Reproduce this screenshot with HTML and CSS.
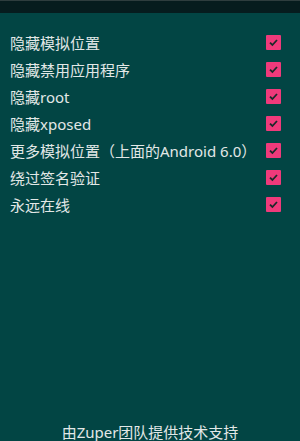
FILE: index.html
```html
<!DOCTYPE html>
<html>
<head>
<meta charset="utf-8">
<link rel="stylesheet" href="styles.css">
</head>
<body>
<div class="topbar"></div>
<div class="list">
  <div class="row"><span class="label">隐藏模拟位置</span><span class="cb"><svg viewBox="0 0 15 15" width="15" height="15"><path d="M4 7.6 L6.4 10 L11 5" fill="none" stroke="#1a2a2a" stroke-width="1.8"/></svg></span></div>
  <div class="row"><span class="label">隐藏禁用应用程序</span><span class="cb"><svg viewBox="0 0 15 15" width="15" height="15"><path d="M4 7.6 L6.4 10 L11 5" fill="none" stroke="#1a2a2a" stroke-width="1.8"/></svg></span></div>
  <div class="row"><span class="label">隐藏root</span><span class="cb"><svg viewBox="0 0 15 15" width="15" height="15"><path d="M4 7.6 L6.4 10 L11 5" fill="none" stroke="#1a2a2a" stroke-width="1.8"/></svg></span></div>
  <div class="row"><span class="label">隐藏xposed</span><span class="cb"><svg viewBox="0 0 15 15" width="15" height="15"><path d="M4 7.6 L6.4 10 L11 5" fill="none" stroke="#1a2a2a" stroke-width="1.8"/></svg></span></div>
  <div class="row"><span class="label">更多模拟位置（上面的Android 6.0）</span><span class="cb"><svg viewBox="0 0 15 15" width="15" height="15"><path d="M4 7.6 L6.4 10 L11 5" fill="none" stroke="#1a2a2a" stroke-width="1.8"/></svg></span></div>
  <div class="row"><span class="label">绕过签名验证</span><span class="cb"><svg viewBox="0 0 15 15" width="15" height="15"><path d="M4 7.6 L6.4 10 L11 5" fill="none" stroke="#1a2a2a" stroke-width="1.8"/></svg></span></div>
  <div class="row"><span class="label">永远在线</span><span class="cb"><svg viewBox="0 0 15 15" width="15" height="15"><path d="M4 7.6 L6.4 10 L11 5" fill="none" stroke="#1a2a2a" stroke-width="1.8"/></svg></span></div>
</div>
<div class="footer">由Zuper团队提供技术支持</div>
</body>
</html>
```
FILE: styles.css
```css
html, body {
  margin: 0;
  padding: 0;
  width: 300px;
  height: 441px;
  overflow: hidden;
}
body {
  background: #024544;
  font-family: "Noto Sans", "Noto Sans CJK SC", sans-serif;
  color: #e2e8e7;
  display: flex;
  flex-direction: column;
}
.topbar {
  height: 12px;
  background: #061c1e;
  border-top: 1px solid #2e3d3e;
}
.list {
  padding: 16px 0 0 10px;
  display: flex;
  flex-direction: column;
}
.row {
  height: 27px;
  display: flex;
  align-items: center;
  justify-content: space-between;
  padding-right: 19px;
}
.label {
  font-size: 15px;
  white-space: nowrap;
}
.cb {
  width: 15px;
  height: 15px;
  background: #ef3a7b;
  border-radius: 1px;
  display: flex;
  flex-shrink: 0;
}
.footer {
  margin-top: auto;
  text-align: center;
  font-size: 15px;
  line-height: 18px;
  height: 18px;
}
```
